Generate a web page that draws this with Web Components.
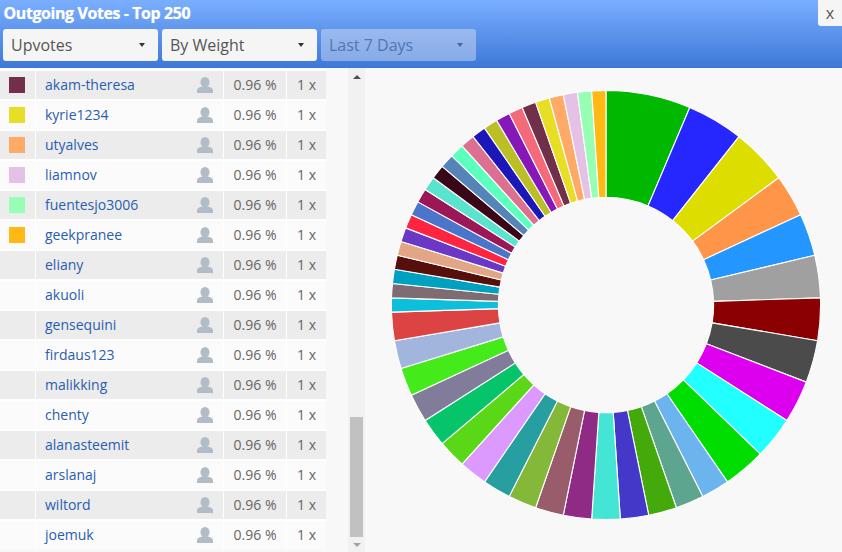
<!DOCTYPE html>
<html lang="en">
<head>
<meta charset="utf-8">
<title>Outgoing Votes</title>
<style>
html,body{margin:0;padding:0;height:100%;overflow:hidden;background:#f8f8f8}
body{font-family:"Open Sans","Liberation Sans",sans-serif}
</style>
</head>
<body>
<vote-app></vote-app>
<script>
function shadow(el, html){
  const r = el.attachShadow({mode:'open'});
  r.innerHTML = html;
  return r;
}
const rows = [
  ['akam-theresa','#722f4a'],['kyrie1234','#e8de26'],['utyalves','#ffaa66'],['liamnov','#e6c1e6'],
  ['fuentesjo3006','#96ffb4'],['geekpranee','#ffb914'],['eliany'],['akuoli'],['gensequini'],
  ['firdaus123'],['malikking'],['chenty'],['alanasteemit'],['arslanaj'],['wiltord'],['joemuk']
];
const slices = [
  [6,'#00b800'],[4,'#2626ff'],[4,'#dddd00'],[3,'#ff9548'],[3,'#2496ff'],[3,'#a0a0a0'],[3,'#8b0000'],
  [3,'#4b4b4b'],[3,'#dd00ee'],[3,'#22ffff'],[3,'#00dd00'],
  [2,'#6cb4ee'],[2,'#5ea58f'],[2,'#44aa0b'],[2,'#4338c8'],[2,'#44e5d5'],[2,'#8f2b84'],[2,'#985c6b'],
  [2,'#84b838'],[2,'#279ea0'],[2,'#dc9aff'],[2,'#5ad818'],[2,'#06c46a'],[2,'#827c9b'],[2,'#44ea1a'],
  [2,'#a2b5dc'],[2,'#dc4444'],
  [1,'#0cc0dc'],[1,'#7e6c72'],[1,'#00a0c0'],[1,'#570f0b'],[1,'#e2a586'],[1,'#6a38c4'],[1,'#ff2440'],
  [1,'#4a75ca'],[1,'#9c1758'],[1,'#5ae4d0'],[1,'#3a0718'],[1,'#5585b8'],[1,'#5cffbd'],[1,'#dd6f90'],
  [1,'#1c17b8'],[1,'#bbbf26'],[1,'#8617b8'],[1,'#f46a7b'],[1,'#722f4a'],[1,'#e8de26'],[1,'#ffaa66'],
  [1,'#e6c1e6'],[1,'#96ffb4'],[1,'#ffb914']
];

class VoteApp extends HTMLElement{
  connectedCallback(){
    shadow(this,`<style>
      :host{display:flex;flex-direction:column;width:842px;height:552px;overflow:hidden;background:#f8f8f8}
      .body{flex:1;display:flex;min-height:0}
    </style>
    <vote-header></vote-header>
    <div class="body"><vote-table></vote-table><vote-scrollbar></vote-scrollbar><donut-chart></donut-chart></div>`);
  }
}
class VoteHeader extends HTMLElement{
  connectedCallback(){
    shadow(this,`<style>
      :host{display:block;position:relative;height:68px;box-sizing:border-box;padding:0 0 0 3px;
        background:linear-gradient(#7aaeff,#3d78d8);flex:none}
      h1{margin:0;height:29px;font:700 16px/27px "Open Sans","Liberation Sans",sans-serif;color:#fff;letter-spacing:-.42px;
        text-shadow:0 0 1px rgba(255,255,255,.6);padding-left:.5px}
      .selects{display:flex;gap:4px}
      button{position:absolute;top:0;right:0;width:24px;height:26px;border:0;padding:0;background:#f5f5f5;
        border-radius:0 0 0 3px;color:#555;font:16px/24px "Open Sans","Liberation Sans",sans-serif}
    </style>
    <h1>Outgoing Votes - Top 250</h1>
    <div class="selects">
      <vote-select>Upvotes</vote-select>
      <vote-select>By Weight</vote-select>
      <vote-select disabled>Last 7 Days</vote-select>
    </div>
    <button>x</button>`);
  }
}
class VoteSelect extends HTMLElement{
  connectedCallback(){
    shadow(this,`<style>
      :host{display:flex;align-items:center;justify-content:space-between;box-sizing:border-box;width:155px;height:32px;
        padding:0 13px 0 8px;background:#f5f5f5;border-radius:3px;color:#555;
        font:16px/32px "Open Sans","Liberation Sans",sans-serif}
      :host([disabled]){opacity:.38}
      i{width:0;height:0;border:3px solid transparent;border-top:4px solid #333;border-bottom:0}
    </style><slot></slot><i></i>`);
  }
}
class VoteTable extends HTMLElement{
  connectedCallback(){
    const r = shadow(this,`<style>
      :host{display:block;flex:none;width:348px;box-sizing:border-box;padding-right:22px;background:#f8f8f8;overflow:hidden}
      .list{background:#fff;padding-top:3px;display:flex;flex-direction:column;gap:2px}
    </style><div class="list"></div>`);
    const list = r.querySelector('.list');
    rows.forEach(([name,color],i)=>{
      const row = document.createElement('vote-row');
      row.setAttribute('name',name);
      if(color) row.setAttribute('color',color);
      if(i%2===0) row.setAttribute('odd','');
      list.appendChild(row);
    });
  }
}
class VoteRow extends HTMLElement{
  connectedCallback(){
    const color = this.getAttribute('color');
    shadow(this,`<style>
      :host{display:grid;grid-template-columns:35px 187px 62px 39px;gap:1px;height:28px;
        font:14px/28px "Open Sans","Liberation Sans",sans-serif;color:#666;--bg:#fbfbfb}
      :host([odd]){--bg:#ececec}
      div{background:var(--bg);text-align:center;height:28px}
      .c{display:flex;align-items:center;justify-content:flex-start;padding-left:9px;box-sizing:border-box}
      .c i{display:block;width:16px;height:16px}
      .n{display:flex;align-items:center;justify-content:space-between;padding:0 10px 0 9px;box-sizing:border-box;text-align:left}
      a{color:#2a5db0;text-decoration:none}
      svg{display:block;width:16px;height:16px}
    </style>
    <div class="c">${color?`<i style="background:${color}"></i>`:''}</div>
    <div class="n"><a>${this.getAttribute('name')}</a>
      <svg viewBox="0 0 16 16"><ellipse cx="8" cy="5.2" rx="4.5" ry="5.2" fill="#b2bcc6"/><path d="M0 16v-2.6c0-2 2-3 5-3.9h6c3 .9 5 1.9 5 3.9V16z" fill="#b2bcc6"/></svg></div>
    <div>0.96 %</div><div>1 x</div>`);
  }
}
class VoteScrollbar extends HTMLElement{
  connectedCallback(){
    shadow(this,`<style>
      :host{display:flex;flex-direction:column;align-items:center;flex:none;width:17px;background:#f1f1f1;box-sizing:border-box;height:484px}
      .btn{flex:none;box-sizing:border-box;width:100%;display:flex;align-items:center;justify-content:center}
      .top{height:16px;padding-top:2px}
      .bottom{height:15px}
      .up{border:4px solid transparent;border-top:0;border-bottom:4px solid #505050;width:0;height:0}
      .down{border:4px solid transparent;border-bottom:0;border-top:4px solid #a3a3a3;width:0;height:0}
      .track{flex:1;width:13px;display:flex;flex-direction:column;justify-content:flex-end}
      .thumb{height:120px;background:#c1c1c1}
    </style>
    <div class="btn top"><i class="up"></i></div>
    <div class="track"><div class="thumb"></div></div>
    <div class="btn bottom"><i class="down"></i></div>`);
  }
}
class DonutChart extends HTMLElement{
  connectedCallback(){
    const cx=241, cy=237, R=214.6, r0=107.6, total=94;
    const pt=(rad,a)=>{const t=a*Math.PI/180;return (cx+rad*Math.sin(t)).toFixed(2)+' '+(cy-rad*Math.cos(t)).toFixed(2)};
    let acc=0, paths='';
    for(const [u,c] of slices){
      const a0=acc/total*360, a1=(acc+u)/total*360; acc+=u;
      paths+=`<path d="M${pt(R,a0)}A${R} ${R} 0 0 1 ${pt(R,a1)}L${pt(r0,a1)}A${r0} ${r0} 0 0 0 ${pt(r0,a0)}Z" fill="${c}" stroke="#fff" stroke-width="1.1" stroke-linejoin="round"/>`;
    }
    shadow(this,`<style>
      :host{display:block;flex:1;min-width:0;height:484px;background:#f8f8f8}
      svg{display:block}
    </style><svg width="477" height="484" viewBox="0 0 477 484">${paths}</svg>`);
  }
}
customElements.define('vote-select',VoteSelect);
customElements.define('vote-header',VoteHeader);
customElements.define('vote-row',VoteRow);
customElements.define('vote-table',VoteTable);
customElements.define('vote-scrollbar',VoteScrollbar);
customElements.define('donut-chart',DonutChart);
customElements.define('vote-app',VoteApp);
</script>
</body>
</html>
